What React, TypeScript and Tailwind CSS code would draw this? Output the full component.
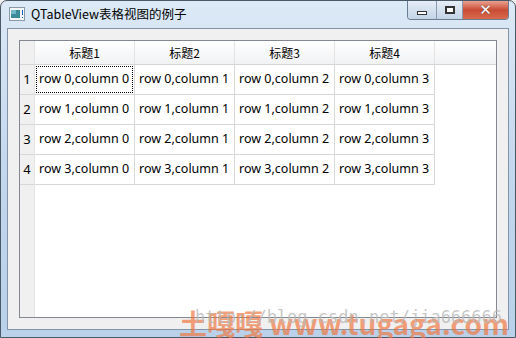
import React from "react";

const cols = ["标题1", "标题2", "标题3", "标题4"];
const rows = [0, 1, 2, 3];

function AppIcon() {
  return (
    <svg width="16" height="14" viewBox="0 0 16 14">
      <rect x="0.5" y="0.5" width="15" height="13" fill="#f4f6f8" stroke="#8a98a8" />
      <rect x="2" y="3" width="9" height="8" fill="#3c8a9a" />
      <rect x="2" y="3" width="5" height="4" fill="#6fb8c8" />
      <rect x="13" y="3" width="1" height="5" fill="#1060c0" />
      <rect x="13" y="10" width="1" height="1" fill="#1060c0" />
    </svg>
  );
}

function WinButtons() {
  return (
    <div className="flex h-[19px] rounded-b-[4px] border border-t-0 border-[#6b7d93] overflow-hidden">
      <div className="w-[29px] flex items-center justify-center bg-gradient-to-b from-[#e6eef7] to-[#c3d3e6] border-r border-[#8a9bb0]">
        <div className="w-[10px] h-[4px] bg-white border border-[#333] mt-[5px]" />
      </div>
      <div className="w-[26px] flex items-center justify-center bg-gradient-to-b from-[#e6eef7] to-[#c3d3e6] border-r border-[#8a9bb0]">
        <div className="w-[10px] h-[8px] border-2 border-[#333] bg-white" />
      </div>
      <div className="w-[45px] flex items-center justify-center bg-gradient-to-b from-[#e8a090] via-[#c94b33] to-[#d76b4e]">
        <span className="text-white font-bold text-[15px] leading-none [font-family:'DejaVu_Sans',sans-serif] [text-shadow:0_0_1px_#333]">✕</span>
      </div>
    </div>
  );
}

export default function App() {
  return (
    <div className="relative w-[516px] h-[338px] overflow-hidden bg-[#f0f0f0] [font-family:'Noto_Sans','Noto_Sans_CJK_SC',sans-serif]">
      <div className="flex flex-col w-full h-full rounded-t-[7px] border border-[#4b5866] bg-gradient-to-b from-[#dce9f6] via-[#c3d7ee] to-[#b9d1ea]">
        {/* Title bar */}
        <div className="h-[27px] flex items-start shrink-0">
          <div className="flex items-center h-[26px] pl-[8px] gap-[6px]">
            <AppIcon />
            <span className="text-[12.5px] text-black leading-none [font-family:'Noto_Sans_CJK_SC',sans-serif]">QTableView表格视图的例子</span>
          </div>
          <div className="ml-auto mr-[6px]">
            <WinButtons />
          </div>
        </div>
        {/* Client */}
        <div className="flex-1 mx-[6px] mb-[7px] border border-[#8394a8] bg-[#f0f0f0] p-[11px] flex">
          <div className="flex-1 border border-[#828790] bg-white flex flex-col text-[12px] text-black">
            {/* Header */}
            <div className="flex h-[24px] border-b border-[#d5d5d5] bg-gradient-to-b from-white to-[#f1f2f4]">
              <div className="w-[15px] border-r border-[#e3e3e3] bg-[#f0f0f0]" />
              {cols.map((c) => (
                <div key={c} className="w-[100px] border-r border-[#e3e3e3] flex items-center justify-center [font-family:'Noto_Sans_CJK_SC',sans-serif] text-[12px]">
                  {c}
                </div>
              ))}
              <div className="flex-1" />
            </div>
            {/* Body */}
            <div className="flex flex-1">
              <div className="w-[15px] bg-[#f0f0f0] border-r border-[#e3e3e3] flex flex-col">
                {rows.map((r) => (
                  <div key={r} className="h-[30px] border-b border-[#d8d8d8] flex items-center justify-center text-[13px]">
                    {r + 1}
                  </div>
                ))}
              </div>
              <div className="flex flex-col">
                {rows.map((r) => (
                  <div key={r} className="flex h-[30px] border-b border-[#d8d8d8]">
                    {[0, 1, 2, 3].map((c) => (
                      <div key={c} className="w-[100px] border-r border-[#d8d8d8] p-[1px]">
                        <div className={`h-full flex items-center pl-[2px] whitespace-nowrap text-[12.5px] ${r === 0 && c === 0 ? "border border-dotted border-black" : "border border-transparent"}`}>
                          row {r},column {c}
                        </div>
                      </div>
                    ))}
                  </div>
                ))}
              </div>
            </div>
          </div>
        </div>
      </div>
      {/* Watermarks */}
      <div className="absolute left-[179px] top-[309px] text-[28px] font-bold text-[#f07840]/70 whitespace-nowrap leading-none [font-family:'Noto_Sans_CJK_SC','Noto_Sans',sans-serif] pointer-events-none">
        土嘎嘎 www.tugaga.com
      </div>
      <div className="absolute left-[195px] top-[305px] text-[17px] text-[#b8b8b8]/80 whitespace-nowrap [font-family:'DejaVu_Sans_Mono',monospace] pointer-events-none">
        http://blog.csdn.net/jia666666
      </div>
    </div>
  );
}
